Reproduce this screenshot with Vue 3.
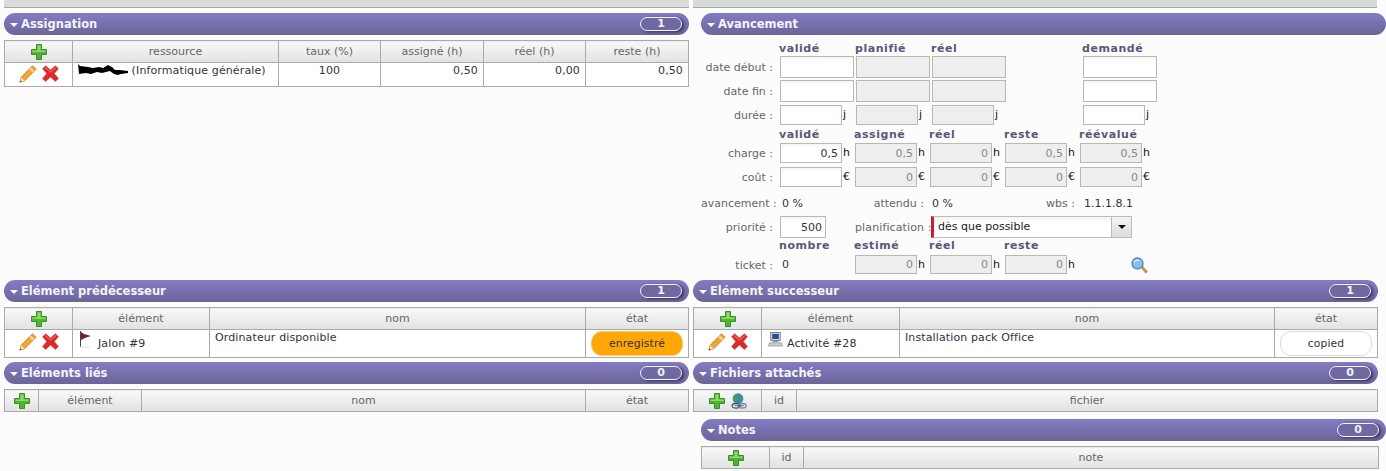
<template>
  <div class="page">
    <svg class="defs" aria-hidden="true">
      <symbol id="i-plus" viewBox="0 0 16 16">
        <path d="M5.5 .5h5v5h5v5h-5v5h-5v-5h-5v-5h5z" fill="#4fb52f" stroke="#3a8f2c" />
        <path d="M6.5 1.5h3v5h5v1.5h-13v-1.5h5z" fill="#93d86a" />
      </symbol>
      <symbol id="i-pencil" viewBox="0 0 18 18">
        <path d="M13.5 .8l3.6 3.4L5.6 15.8 .8 17.2l1.3-4.9z" fill="#f5a42c" stroke="#b9772a" stroke-width=".8" />
        <path d="M12 2.5l3.4 3.3-1.8 1.8-3.4-3.3z" fill="#fbd28a" />
        <path d="M2.1 12.3l3.5 3.5-4.8 1.4z" fill="#f6dfb4" />
        <path d="M.8 17.2l.5-2 1.5 1.5z" fill="#6b4a22" />
      </symbol>
      <symbol id="i-del" viewBox="0 0 17 17">
        <path d="M3.6 .8L8.5 5l4.9-4.2 3 3L12.2 8.500l4.200 4.900-3 3L8.500 12l-4.900 4.400-3-3L4.800 8.500.6 3.800z" fill="#dc2a2a" stroke="#c43434" stroke-width=".6" />
        <path d="M3.600 2L8.500 6.400 13.400 2l1 .8-5.900 5-5.900-5z" fill="#f06a64" />
      </symbol>
      <symbol id="i-flag" viewBox="0 0 15 17">
        <path d="M1.500 0v16" stroke="#444" stroke-width="1" />
        <path d="M2 1l3 2 7 2-5 1.500L2 9z" fill="#7d1c2c" />
        <path d="M1 16h10" stroke="#ddd" stroke-width="1" />
      </symbol>
      <symbol id="i-pc" viewBox="0 0 16 16">
        <rect x="3" y=".5" width="10" height="8.500" fill="#dfe3ea" stroke="#6f7686" />
        <rect x="4.500" y="2" width="7" height="5.500" fill="#2b4a9c" />
        <path d="M5 9.500h6v1.500H5z" fill="#9a9ea8" />
        <path d="M1.500 11.500h13l1 3.500H.5z" fill="#c9ccd2" stroke="#8a8e98" stroke-width=".7" />
      </symbol>
      <symbol id="i-link" viewBox="0 0 16 16">
        <circle cx="7" cy="5.500" r="5.300" fill="#3f86b8" />
        <path d="M3 2.500l3-1.500 2 1-1 2-2 .5 1 2.500-1.500 1.500L2.200 6.500zM8.500 6.500l3-1.500.8 1.500-2 3z" fill="#4c9a4a" />
        <ellipse cx="5" cy="12.800" rx="3.900" ry="2.300" fill="#fff" stroke="#43566e" stroke-width="1.300" />
        <ellipse cx="11.300" cy="12.800" rx="3.900" ry="2.300" fill="none" stroke="#6d8aa6" stroke-width="1.300" />
        <path d="M3.500 12.800h9" stroke="#43566e" stroke-width="1" />
      </symbol>
      <symbol id="i-zoom" viewBox="0 0 17 17">
        <path d="M10 10.500l1.500-1.500 5 5.500-1.800 1.800z" fill="#c9953e" stroke="#a67a30" stroke-width=".5" />
        <circle cx="6.500" cy="6.500" r="5.500" fill="#8dbdea" stroke="#4a87c4" stroke-width="1.300" />
        <path d="M3 6a3.500 3.500 0 0 1 3.500-3.500 3 2 0 0 1 2.500 1.500 5 4 0 0 0-6 2z" fill="#e8f3fd" />
      </symbol>
    </svg>

    <!-- ligne 1 : assignation / avancement -->
    <div class="cell left">
      <div class="top-bar"></div>
      <div class="bar">
        <span class="arrow"></span><span class="title">Assignation</span>
        <span class="count">1</span>
      </div>
      <table class="grid">
        <colgroup>
          <col style="width: 68px" /><col style="width: 206px" /><col style="width: 102px" />
          <col style="width: 103px" /><col style="width: 102px" /><col style="width: 103px" />
        </colgroup>
        <thead>
          <tr>
            <th><svg class="ic16"><use href="#i-plus" /></svg></th>
            <th>ressource</th><th>taux (%)</th><th>assigné (h)</th><th>réel (h)</th><th>reste (h)</th>
          </tr>
        </thead>
        <tbody>
          <tr class="row-a">
            <td class="acts">
              <svg class="ic18"><use href="#i-pencil" /></svg>
              <svg class="ic17"><use href="#i-del" /></svg>
            </td>
            <td class="top">
              <svg class="scribble" viewBox="0 0 50 11">
                <path d="M0 0l2 2 8 1 5 1 6-1 4 1 5-3 4 2 3 3h5l8 1v2l-7 1-3 1-4-1-4-3-4 1-4 1-5-1-6 2-5-1-7 1z" fill="#000" />
              </svg>
              (Informatique générale)
            </td>
            <td class="mid top">100</td>
            <td class="num">0,50</td><td class="num">0,00</td><td class="num">0,50</td>
          </tr>
        </tbody>
      </table>
    </div>

    <div class="cell right">
      <div class="top-bar flat"></div>
      <div class="bar indent">
        <span class="arrow"></span><span class="title">Avancement</span>
      </div>
      <div class="form">
        <div class="line cols-a h-head1">
          <span></span><b>validé</b><b>planifié</b><b>réel</b><b>demandé</b>
        </div>
        <div class="line cols-a h-22">
          <label>date début :</label>
          <input class="fld w74" /><input class="fld w74 off" readonly /><input class="fld w74 off" readonly /><input class="fld w74" />
        </div>
        <div class="line cols-a h-22 mt2">
          <label>date fin :</label>
          <input class="fld w74" /><input class="fld w74 off" readonly /><input class="fld w74 off" readonly /><input class="fld w74" />
        </div>
        <div class="line cols-a h-20 mt3">
          <label>durée :</label>
          <span class="u"><input class="fld w62" />j</span>
          <span class="u"><input class="fld w62 off" readonly />j</span>
          <span class="u"><input class="fld w62 off" readonly />j</span>
          <span class="u"><input class="fld w62" />j</span>
        </div>

        <div class="line cols-b h-head2">
          <span></span><b>validé</b><b>assigné</b><b>réel</b><b>reste</b><b>réévalué</b>
        </div>
        <div class="line cols-b h-20">
          <label>charge :</label>
          <span class="u"><input class="fld w62" value="0,5" />h</span>
          <span v-for="v in chargeVals" :key="v.k" class="u"><input class="fld w62 off" readonly :value="v.val" />h</span>
        </div>
        <div class="line cols-b h-20 mt4">
          <label>coût :</label>
          <span class="u"><input class="fld w62" />€</span>
          <span v-for="k in 4" :key="k" class="u"><input class="fld w62 off" readonly value="0" />€</span>
        </div>
        <div class="line cols-b h-stat">
          <label class="tight">avancement :</label>
          <span class="val">0 %</span>
          <label class="end">attendu :</label>
          <span class="val">0 %</span>
          <label class="end wbs">wbs :</label>
          <span class="val wbs-val">1.1.1.8.1</span>
        </div>
        <div class="line cols-b h-20 mt-prio">
          <label>priorité :</label>
          <input class="fld w46" value="500" />
          <label class="end plan">planification :</label>
          <div class="select">
            <span class="sel-text">dès que possible</span>
            <span class="sel-btn"><i></i></span>
          </div>
        </div>
        <div class="line cols-b h-head3">
          <span></span><b>nombre</b><b>estimé</b><b>réel</b><b>reste</b>
        </div>
        <div class="line cols-b h-19">
          <label>ticket :</label>
          <span class="val">0</span>
          <span v-for="k in 3" :key="k" class="u"><input class="fld w62 h19 off" readonly value="0" />h</span>
          <svg class="ic17 loupe"><use href="#i-zoom" /></svg>
        </div>
      </div>
    </div>

    <!-- ligne 2 : prédécesseur / successeur -->
    <div class="cell left">
      <div class="bar first">
        <span class="arrow"></span><span class="title">Elément prédécesseur</span>
        <span class="count">1</span>
      </div>
      <table class="grid">
        <colgroup>
          <col style="width: 68px" /><col style="width: 137px" /><col style="width: 376px" /><col style="width: 103px" />
        </colgroup>
        <thead>
          <tr>
            <th><svg class="ic16"><use href="#i-plus" /></svg></th>
            <th>élément</th><th>nom</th><th>état</th>
          </tr>
        </thead>
        <tbody>
          <tr class="row-b">
            <td class="acts">
              <svg class="ic18"><use href="#i-pencil" /></svg>
              <svg class="ic17"><use href="#i-del" /></svg>
            </td>
            <td class="item">
              <div class="item-in"><svg class="ic-item"><use href="#i-flag" /></svg><span>Jalon #9</span></div>
            </td>
            <td class="top">Ordinateur disponible</td>
            <td class="state"><span class="pill orange">enregistré</span></td>
          </tr>
        </tbody>
      </table>
    </div>

    <div class="cell right">
      <div class="bar first narrow">
        <span class="arrow"></span><span class="title">Elément successeur</span>
        <span class="count">1</span>
      </div>
      <table class="grid">
        <colgroup>
          <col style="width: 68px" /><col style="width: 138px" /><col style="width: 375px" /><col style="width: 103px" />
        </colgroup>
        <thead>
          <tr>
            <th><svg class="ic16"><use href="#i-plus" /></svg></th>
            <th>élément</th><th>nom</th><th>état</th>
          </tr>
        </thead>
        <tbody>
          <tr class="row-b">
            <td class="acts">
              <svg class="ic18"><use href="#i-pencil" /></svg>
              <svg class="ic17"><use href="#i-del" /></svg>
            </td>
            <td class="item">
              <div class="item-in"><svg class="ic-item"><use href="#i-pc" /></svg><span>Activité #28</span></div>
            </td>
            <td class="top">Installation pack Office</td>
            <td class="state"><span class="pill white">copied</span></td>
          </tr>
        </tbody>
      </table>
    </div>

    <!-- ligne 3 : liés / fichiers + notes -->
    <div class="cell left">
      <div class="bar first">
        <span class="arrow"></span><span class="title">Eléments liés</span>
        <span class="count">0</span>
      </div>
      <table class="grid">
        <colgroup>
          <col style="width: 34px" /><col style="width: 103px" /><col style="width: 444px" /><col style="width: 103px" />
        </colgroup>
        <thead>
          <tr>
            <th><svg class="ic16"><use href="#i-plus" /></svg></th>
            <th>élément</th><th>nom</th><th>état</th>
          </tr>
        </thead>
      </table>
    </div>

    <div class="cell right">
      <div class="bar first narrow">
        <span class="arrow"></span><span class="title">Fichiers attachés</span>
        <span class="count">0</span>
      </div>
      <table class="grid">
        <colgroup>
          <col style="width: 68px" /><col style="width: 35px" /><col style="width: 581px" />
        </colgroup>
        <thead>
          <tr>
            <th class="pair">
              <svg class="ic16"><use href="#i-plus" /></svg>
              <svg class="ic16"><use href="#i-link" /></svg>
            </th>
            <th>id</th><th>fichier</th>
          </tr>
        </thead>
      </table>
      <div class="bar notes indent">
        <span class="arrow"></span><span class="title">Notes</span>
        <span class="count">0</span>
      </div>
      <table class="grid notes-t">
        <colgroup>
          <col style="width: 68px" /><col style="width: 34px" /><col style="width: 575px" />
        </colgroup>
        <thead>
          <tr>
            <th><svg class="ic16"><use href="#i-plus" /></svg></th>
            <th>id</th><th>note</th>
          </tr>
        </thead>
      </table>
    </div>
  </div>
</template>

<script setup>
const chargeVals = [
  { k: 'assigne', val: '0,5' },
  { k: 'reel', val: '0' },
  { k: 'reste', val: '0,5' },
  { k: 'reeval', val: '0,5' }
]
</script>

<style>
html, body {
  margin: 0;
  background: #fcfcfc;
}
</style>

<style scoped>
.page {
  display: grid;
  grid-template-columns: 689px 693px;
  grid-template-rows: 280px 82px auto;
  padding-left: 4px;
  width: 1382px;
  height: 471px;
  overflow: hidden;
  font-family: "DejaVu Sans", sans-serif;
  font-size: 11px;
  color: #333;
}

.defs {
  position: absolute;
  width: 0;
  height: 0;
}

.left { width: 685px; }
.right { width: 693px; }

/* bandeau gris en haut */
.top-bar {
  height: 8px;
  background: #dcdddb;
  border-bottom: 1px solid #a9a9a5;
  box-sizing: border-box;
  margin-bottom: 5px;
}
.top-bar.flat {
  width: 684px;
  background: #d7dcd8;
}

/* barre de titre violette */
.bar {
  display: flex;
  align-items: center;
  height: 22px;
  box-sizing: border-box;
  padding-left: 6px;
  padding-right: 7px;
  border-radius: 11px;
  background: linear-gradient(#837cc4, #6b6598);
}
.bar.indent {
  margin-left: 8px;
}
.bar.narrow {
  width: 685px;
}
.bar.notes {
  margin-top: 7px;
}
.arrow {
  width: 0;
  height: 0;
  margin-right: 3px;
  margin-top: 1px;
  border-left: 4px solid transparent;
  border-right: 4px solid transparent;
  border-top: 4px solid #fff;
}
.title {
  font-size: 11.5px;
  font-weight: bold;
  color: #f4f4fa;
}
.count {
  margin-left: auto;
  width: 40px;
  height: 12px;
  line-height: 12px;
  text-align: center;
  font-size: 11px;
  font-weight: bold;
  color: #f0f0f8;
  background: #6f69a2;
  border: 1px solid #f4f4fa;
  border-radius: 7px;
  box-shadow: 2px 1px 3px rgba(40, 36, 80, 0.8);
}

/* tableaux */
.grid {
  table-layout: fixed;
  border-collapse: collapse;
  width: 684px;
  margin-top: 5px;
  background: #fff;
}
.grid.notes-t {
  width: 677px;
  margin-left: 8px;
}
.grid th,
.grid td {
  border: 1px solid #aaa;
  padding: 0 5px;
  font-size: 11px;
  box-sizing: border-box;
}
.grid td {
  letter-spacing: 0.12px;
}
.grid th {
  height: 22px;
  font-weight: normal;
  color: #666;
  background: linear-gradient(#f8f8f8, #e2e2e2);
  padding: 0;
  text-align: center;
}
.grid th svg {
  display: inline-block;
  vertical-align: top;
  margin-top: 1px;
}
.grid th.pair svg + svg {
  margin-left: 6px;
}
.row-a td { height: 24px; }
.row-b td { height: 28px; }
.grid td.top {
  vertical-align: top;
  padding-top: 1px;
}
.grid td.mid { text-align: center; }
.grid td.num {
  text-align: right;
  vertical-align: top;
  padding-top: 1px;
  padding-right: 5px;
}
.grid td.acts {
  padding: 2px 0 0;
  vertical-align: top;
  text-align: center;
  white-space: nowrap;
}
.row-b td.acts { padding-top: 3px; }
.acts svg { vertical-align: top; }
.acts .ic18 { margin-right: 5px; }
.grid td.item {
  padding: 1px 0 0 6px;
  vertical-align: top;
}
.item-in {
  display: flex;
  white-space: nowrap;
}
.item-in span {
  margin-left: 4px;
  margin-top: 6px;
}
.ic-item {
  flex: none;
  width: 15px;
  height: 17px;
}
.grid td.state {
  padding: 0;
  text-align: center;
}
.pill {
  display: inline-block;
  box-sizing: border-box;
  width: 92px;
  height: 25px;
  line-height: 23px;
  border-radius: 11px;
  color: #333;
  font-size: 10.8px;
  vertical-align: middle;
}
.pill.orange {
  background: #ffa707;
  border: 1px solid #f3c970;
}
.pill.white {
  background: #fff;
  border: 1px solid #ddd;
}
.scribble {
  width: 50px;
  height: 11px;
  vertical-align: -1px;
}
.ic16 { width: 16px; height: 16px; }
.ic17 { width: 17px; height: 17px; }
.ic18 { width: 18px; height: 18px; }

/* formulaire avancement */
.form {
  margin-left: 8px;
}
.line {
  display: grid;
  align-items: center;
}
.cols-a { grid-template-columns: 79px 76px 76px 151px 76px; }
.cols-b { grid-template-columns: 79px 75px 75px 75px 75px 75px; position: relative; }
.h-head1 { height: 21px; align-items: end; }
.h-head2 { height: 18px; align-items: end; padding-bottom: 1px; box-sizing: border-box; }
.h-head3 { height: 19px; align-items: end; padding-bottom: 2px; box-sizing: border-box; }
.h-22 { height: 22px; }
.h-20 { height: 20px; }
.h-19 { height: 19px; }
.h-stat { height: 16px; margin-top: 8px; }
.mt2 { margin-top: 2px; }
.mt3 { margin-top: 3px; }
.mt4 { margin-top: 4px; }
.mt-prio { margin-top: 5px; }
.line b {
  font-size: 11px;
  font-weight: bold;
  letter-spacing: 0.55px;
  color: #5a5778;
  line-height: 14px;
  margin-left: -1px;
}
.line label {
  text-align: right;
  padding-right: 7px;
  padding-top: 1px;
  color: #666;
  white-space: nowrap;
}
.line label.tight { padding-right: 8px; padding-top: 0; }
.line label.end { padding-right: 6px; padding-top: 0; }
.line label.wbs { padding-right: 5px; }
.line label.plan { padding-right: 0; padding-top: 1px; margin-right: -1px; letter-spacing: 0.12px; }
.val {
  padding-left: 2px;
  color: #333;
}
.wbs-val { padding-left: 4px; }
.u {
  display: flex;
  align-items: center;
  color: #111;
  line-height: 14px;
}
.fld {
  display: block;
  box-sizing: border-box;
  height: 100%;
  margin: 0 1px 0 0;
  padding: 0 3px 0 2px;
  border: 1px solid #b8b8b4;
  border-radius: 0;
  background: linear-gradient(#f6f6f6, #fff 5px);
  font-family: inherit;
  font-size: 11px;
  text-align: right;
  color: #333;
  outline: none;
}
.u .fld { height: 20px; }
.u .h19 { height: 19px; }
.w74 { width: 74px; }
.w62 { width: 62px; }
.w46 { width: 46px; }
.fld.off {
  background: #eee;
  color: #888;
}
.select {
  grid-column: 4 / 7;
  display: flex;
  box-sizing: border-box;
  width: 201px;
  height: 22px;
  margin-left: 1px;
  border: 1px solid #bbb;
  border-left: 3px solid #c8202c;
  background: linear-gradient(#f4f4f4, #fff 6px);
}
.sel-text {
  flex: 1;
  padding-left: 4px;
  line-height: 20px;
  color: #222;
}
.sel-btn {
  display: flex;
  align-items: center;
  justify-content: center;
  width: 19px;
  border-left: 1px solid #bbb;
  background: linear-gradient(#f4f4f4, #ddd);
}
.sel-btn i {
  width: 0;
  height: 0;
  border-left: 4px solid transparent;
  border-right: 4px solid transparent;
  border-top: 4px solid #111;
}
.loupe {
  position: absolute;
  left: 430px;
  top: 2px;
}
</style>
